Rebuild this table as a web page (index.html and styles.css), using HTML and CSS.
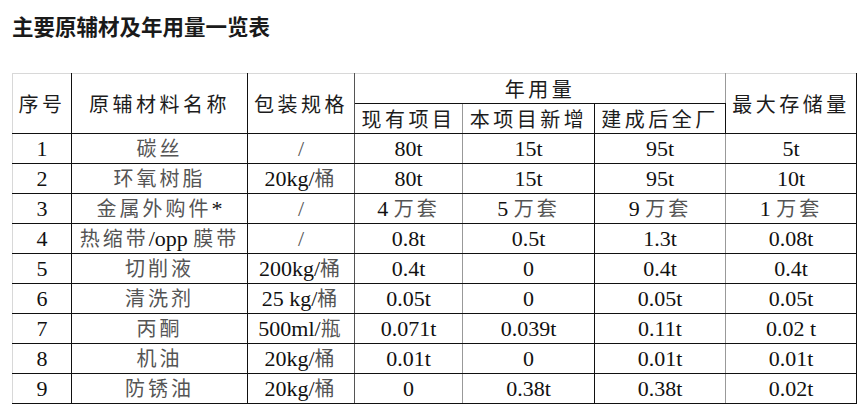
FILE: index.html
```html
<!DOCTYPE html>
<html lang="zh">
<head>
<meta charset="utf-8">
<link rel="stylesheet" href="styles.css">
</head>
<body>
<h1 class="title">主要原辅材及年用量一览表</h1>
<table class="tbl">
  <colgroup>
    <col class="c1"><col class="c2"><col class="c3"><col class="c4"><col class="c5"><col class="c6"><col class="c7">
  </colgroup>
  <thead>
    <tr>
      <th rowspan="2" class="b-l">序号</th>
      <th rowspan="2">原辅材料名称</th>
      <th rowspan="2" class="g1">包装规格</th>
      <th colspan="3" class="g2">年用量</th>
      <th rowspan="2">最大存储量</th>
    </tr>
    <tr>
      <th class="g2">现有项目</th>
      <th>本项目新增</th>
      <th class="g2">建成后全厂</th>
    </tr>
  </thead>
  <tbody>
    <tr><td class="b-l">1</td><td><span class="zh">碳丝</span></td><td class="g1"><span class="sl">/</span></td><td class="g2">80t</td><td>15t</td><td class="g2">95t</td><td>5t</td></tr>
    <tr><td class="b-l">2</td><td><span class="zh">环氧树脂</span></td><td class="g1">20kg/<span class="zh">桶</span></td><td class="g2">80t</td><td>15t</td><td class="g2">95t</td><td>10t</td></tr>
    <tr><td class="b-l">3</td><td><span class="zh">金属外购件</span>*</td><td class="g1"><span class="sl">/</span></td><td class="g2">4 <span class="zh">万套</span></td><td>5 <span class="zh">万套</span></td><td class="g2">9 <span class="zh">万套</span></td><td>1 <span class="zh">万套</span></td></tr>
    <tr><td class="b-l">4</td><td><span class="zh">热缩带</span>/opp <span class="zh">膜带</span></td><td class="g1"><span class="sl">/</span></td><td class="g2">0.8t</td><td>0.5t</td><td class="g2">1.3t</td><td>0.08t</td></tr>
    <tr><td class="b-l">5</td><td><span class="zh">切削液</span></td><td class="g1">200kg/<span class="zh">桶</span></td><td class="g2">0.4t</td><td>0</td><td class="g2">0.4t</td><td>0.4t</td></tr>
    <tr><td class="b-l">6</td><td><span class="zh">清洗剂</span></td><td class="g1">25 kg/<span class="zh">桶</span></td><td class="g2">0.05t</td><td>0</td><td class="g2">0.05t</td><td>0.05t</td></tr>
    <tr><td class="b-l">7</td><td><span class="zh">丙酮</span></td><td class="g1">500ml/<span class="zh">瓶</span></td><td class="g2">0.071t</td><td>0.039t</td><td class="g2">0.11t</td><td>0.02 t</td></tr>
    <tr><td class="b-l">8</td><td><span class="zh">机油</span></td><td class="g1">20kg/<span class="zh">桶</span></td><td class="g2">0.01t</td><td>0</td><td class="g2">0.01t</td><td>0.01t</td></tr>
    <tr><td class="b-l">9</td><td><span class="zh">防锈油</span></td><td class="g1">20kg/<span class="zh">桶</span></td><td class="g2">0</td><td>0.38t</td><td class="g2">0.38t</td><td>0.02t</td></tr>
  </tbody>
</table>
</body>
</html>
```
FILE: styles.css
```css
html, body {
  margin: 0;
  padding: 0;
  background: #ffffff;
}
body {
  padding: 11px 0 0 12px;
}
.title {
  margin: 0;
  font-family: "Noto Sans CJK SC", "Noto Sans", sans-serif;
  font-weight: 700;
  font-size: 21.5px;
  line-height: 30px;
  color: #1a1a1a;
}
.tbl {
  margin-top: 32px;
  border-collapse: collapse;
  table-layout: fixed;
  width: 845px;
  font-family: "Liberation Serif", "Noto Sans CJK SC", serif;
  font-size: 22px;
  color: #111;
}
.c1 { width: 59px; }
.c2 { width: 176px; }
.c3 { width: 107px; }
.c4 { width: 108px; }
.c5 { width: 132px; }
.c6 { width: 131px; }
.c7 { width: 131px; }
.tbl th, .tbl td {
  border: 1px solid #111;
  height: 29px;
  padding: 0;
  text-align: center;
  vertical-align: middle;
  line-height: 28px;
  white-space: nowrap;
  overflow: hidden;
}
.tbl thead tr:first-child th {
  border-top-color: #d8d8d8;
}
.tbl th {
  font-family: "Noto Sans CJK SC", sans-serif;
  font-weight: 400;
  font-size: 20px;
  letter-spacing: 3.5px;
  color: #1c1c1c;
}
.tbl .b-l {
  border-left-color: #d8d8d8;
}
.tbl .g1 {
  border-right-color: #555;
}
.tbl .g2 {
  border-right-color: #999;
}
.zh {
  font-family: "Noto Sans CJK SC", sans-serif;
  font-size: 20px;
  letter-spacing: 3px;
  color: #555;
}
.sl {
  color: #555;
}
```
